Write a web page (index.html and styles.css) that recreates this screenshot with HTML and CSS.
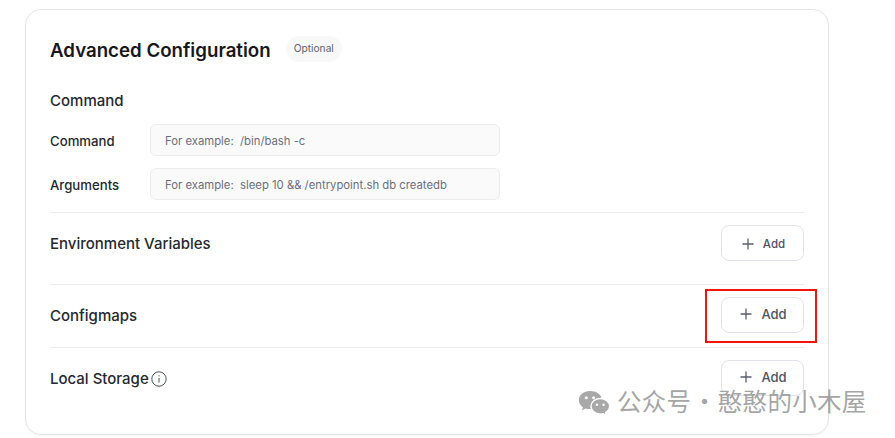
FILE: index.html
```html
<!DOCTYPE html>
<html lang="en">
<head>
<meta charset="utf-8">
<title>Advanced Configuration</title>
<link rel="stylesheet" href="styles.css">
</head>
<body>
<main class="card">
  <header class="head">
    <h2 class="title">Advanced Configuration</h2>
    <span class="pill">Optional</span>
  </header>
  <section class="command">
    <h3 class="sub">Command</h3>
    <div class="field">
      <label class="label">Command</label>
      <div class="input">For example:&nbsp; /bin/bash -c</div>
    </div>
    <div class="field">
      <label class="label">Arguments</label>
      <div class="input">For example:&nbsp; sleep 10 &amp;&amp; /entrypoint.sh db createdb</div>
    </div>
  </section>
  <section class="row row-env">
    <span class="row-title">Environment Variables</span>
    <button class="add add-small"><svg class="plus" viewBox="0 0 12 12"><path d="M6 .5v11M.5 6h11"/></svg>Add</button>
  </section>
  <section class="row row-config">
    <span class="row-title">Configmaps</span>
    <button class="add"><svg class="plus" viewBox="0 0 12 12"><path d="M6 .5v11M.5 6h11"/></svg>Add</button>
    <span class="mark"></span>
  </section>
  <section class="row row-storage">
    <span class="row-title">Local Storage<svg class="info" viewBox="0 0 16 16"><circle cx="8" cy="8" r="7.2"/><path d="M8 7v4.6"/><path d="M8 4.2v1.2"/></svg></span>
    <button class="add"><svg class="plus" viewBox="0 0 12 12"><path d="M6 .5v11M.5 6h11"/></svg>Add</button>
  </section>
</main>
<div class="watermark">
  <svg class="wechat" viewBox="0 0 32 26"><path class="b1" d="M12 1C5.700 1 .8 5 .8 10.100c0 2.900 1.600 5.400 4.100 7.100l-1 3.200 3.600-1.900c1.400.4 2.900.6 4.500.6h.9c-.3-.9-.4-1.800-.4-2.700 0-4.900 4.600-8.700 10.200-8.700h.7C22.500 3.900 17.700 1 12 1z"/><path class="b2" d="M31.500 16.300c0-4.300-4.200-7.700-9.200-7.700s-9.200 3.400-9.200 7.700 4.200 7.700 9.200 7.700c1.100 0 2.100-.1 3.100-.4l2.900 1.600-.8-2.600c2.400-1.400 4-3.700 4-6.300z"/><circle class="e" cx="8.300" cy="7.800" r="1.500"/><circle class="e" cx="15.600" cy="7.800" r="1.500"/><circle class="e" cx="19" cy="14.700" r="1.200"/><circle class="e" cx="25.600" cy="14.700" r="1.200"/></svg>
  <span class="wm-text">公众号 · 憨憨的小木屋</span>
</div>
</body>
</html>
```
FILE: styles.css
```css
* { box-sizing: border-box; }
html, body { margin: 0; height: 438px; overflow: hidden; background: #fff; }
body { font-family: Inter, "Noto Sans CJK SC", sans-serif; color: #24282f; padding: 9px 0 0 25px; position: relative; }
.card {
  width: 804px; height: 426px;
  border: 1px solid #e4e4e7; border-radius: 16px;
  padding: 0 24px;
  box-shadow: 0 1px 2px rgba(0,0,0,.04);
}
.head { display: flex; align-items: center; height: 28px; margin-top: 27px; }
.title { margin: 0; font-size: 18.700px; font-weight: 600; color: #18181b; line-height: 28px; }
.pill {
  margin: -4px 0 0 15px; height: 26px; padding: 0 8px; border-radius: 13px;
  background: #f8f8f9; color: #62666e; font-size: 10.200px; line-height: 25px;
}
.command { height: 148px; border-bottom: 1px solid #ececef; padding-top: 25px; }
.sub { margin: 0 0 12px; font-size: 15px; font-weight: 500; line-height: 22px; color: #24282f; }
.field { display: flex; align-items: center; height: 32px; margin-bottom: 12px; }
.label { width: 100px; padding-top: 2px; font-size: 13.200px; font-weight: 500; color: #24282f; }
.input {
  width: 350px; height: 32px; padding: 0 14px; line-height: 32px;
  background: #fafafb; border: 1px solid #ececef; border-radius: 6px;
  color: #6b6f7b; font-size: 11.300px;
}
.row { display: flex; align-items: flex-start; justify-content: space-between; border-bottom: 1px solid #ececef; position: relative; }
.row-env { height: 72px; padding-top: 12px; }
.row-config { height: 63px; padding-top: 12px; }
.row-storage { height: 75px; padding-top: 12px; border-bottom: 0; }
.row-title { font-size: 15px; font-weight: 500; line-height: 36px; padding-top: 1px; color: #24282f; display: flex; align-items: center; }
.add {
  width: 83px; height: 36px; border: 1px solid #e2e2ea; border-radius: 8px; background: #fff;
  color: #4d5263; font: 500 13px Inter, sans-serif;
  display: flex; align-items: center; justify-content: center; gap: 9px; padding: 0 0 2px 2px;
}
.add-small { font-size: 11.500px; gap: 9px; padding: 1px 0 0 2px; }
.plus { width: 12px; height: 12px; fill: none; stroke: #5a5f6e; stroke-width: 1.300; }
.info { width: 16px; height: 16px; margin-left: 2px; fill: none; stroke: #4d5159; stroke-width: 1; }
.mark { position: absolute; right: -13px; top: 4px; width: 112px; height: 54px; border: 2px solid #f5140c; pointer-events: none; }
.watermark { position: absolute; left: 578px; top: 389px; display: flex; align-items: center; gap: 7px; height: 28px; }
.wechat { width: 32px; height: 26px; }
.b1 { fill: #a8a8a8; }
.b2 { fill: #a8a8a8; stroke: #fff; stroke-width: 1.200; }
.e { fill: #fff; }
.wm-text { font-family: "Noto Sans CJK SC", sans-serif; font-size: 24.500px; letter-spacing: .3px; line-height: 28px; margin-top: -4px; color: rgba(140,140,140,.8); white-space: nowrap; word-spacing: -5px; }
```
